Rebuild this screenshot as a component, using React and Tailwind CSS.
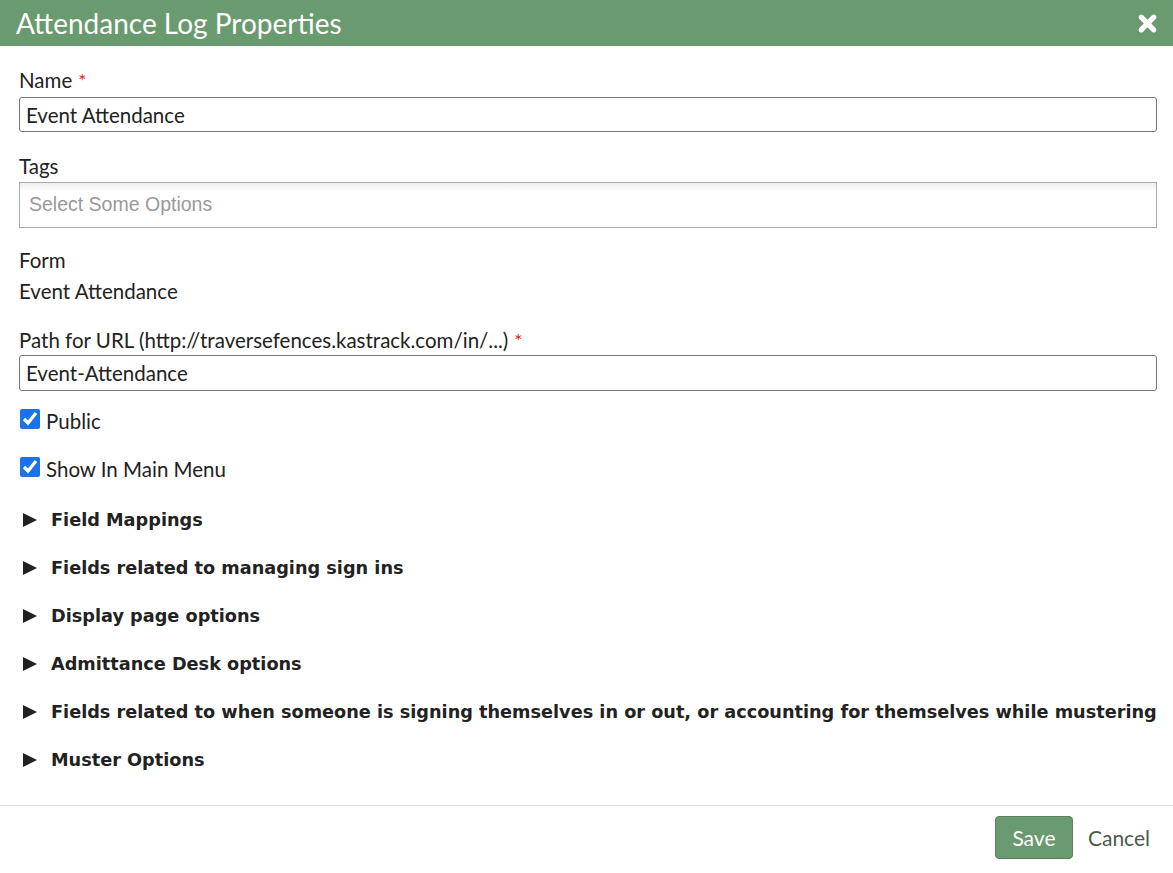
import { useState } from 'react';

const body = { fontFamily: 'Lato, "Noto Sans", sans-serif' };
const heading = { fontFamily: '"DejaVu Sans", Verdana, sans-serif' };

const sections = [
  'Field Mappings',
  'Fields related to managing sign ins',
  'Display page options',
  'Admittance Desk options',
  'Fields related to when someone is signing themselves in or out, or accounting for themselves while mustering',
  'Muster Options',
];

function Label({ children, required }) {
  return (
    <div className="text-[20.5px] leading-[24px] text-[#222]">
      {children}
      {required && <span className="ml-[6px] text-[#e02020] text-[19px]">*</span>}
    </div>
  );
}

function Check({ label }) {
  const [on, setOn] = useState(true);
  return (
    <label className="flex items-center gap-[6px] h-[24px] text-[20.5px] text-[#222]">
      <input
        type="checkbox"
        checked={on}
        onChange={() => setOn(!on)}
        className="w-[20px] h-[20px] accent-[#1a73e8] m-0 -mt-[4px] ml-[1px]"
      />
      {label}
    </label>
  );
}

export default function App() {
  const [name, setName] = useState('Event Attendance');
  const [path, setPath] = useState('Event-Attendance');

  return (
    <div className="w-[1173px] h-[873px] bg-white flex flex-col overflow-hidden" style={body}>
      <div className="h-[46px] bg-[#6a9a6f] flex items-center justify-between pl-[16px] pr-[15px] shrink-0">
        <h1 className="text-white text-[28px] leading-none">Attendance Log Properties</h1>
        <button className="text-white">
          <svg width="21" height="21" viewBox="0 0 20 20">
            <path d="M4 4 L16 16 M16 4 L4 16" stroke="white" strokeWidth="5" strokeLinecap="round" />
          </svg>
        </button>
      </div>

      <div className="flex-1 px-[19px] pt-[22px] pr-[16px]">
        <Label required>Name</Label>
        <input
          value={name}
          onChange={(e) => setName(e.target.value)}
          className="mt-[4px] w-full h-[35px] border border-[#777] rounded-[3px] px-[6px] text-[20.5px] text-[#222] outline-none"
        />

        <div className="mt-[22px]">
          <Label>Tags</Label>
        </div>
        <div className="mt-[4px] h-[46px] border border-[#aaa] bg-gradient-to-b from-[#eee] to-white to-[20%] flex items-center px-[9px]">
          <span className="text-[19.5px] text-[#999]" style={{ fontFamily: '"Liberation Sans", Arial, sans-serif' }}>
            Select Some Options
          </span>
        </div>

        <div className="mt-[20px]">
          <Label>Form</Label>
        </div>
        <div className="mt-[7px] text-[20.5px] leading-[24px] text-[#222]">Event Attendance</div>

        <div className="mt-[25px]">
          <Label required>Path for URL (http://traversefences.kastrack.com/in/...)</Label>
        </div>
        <input
          value={path}
          onChange={(e) => setPath(e.target.value)}
          className="mt-[2px] w-full h-[36px] border border-[#777] rounded-[3px] px-[6px] text-[20.5px] text-[#222] outline-none"
        />

        <div className="mt-[18px] flex flex-col gap-[24px]">
          <Check label="Public" />
          <Check label="Show In Main Menu" />
        </div>

        <div className="mt-[27px] flex flex-col gap-[24px]" style={heading}>
          {sections.map((s) => (
            <div key={s} className="flex items-center h-[24px] text-[#222] text-[17.7px] font-bold whitespace-nowrap">
              <svg width="14" height="14" viewBox="0 0 14 14" className="ml-[4px] mr-[14px] shrink-0">
                <path d="M0 0 L14 7 L0 14 Z" fill="#222" />
              </svg>
              <span>{s}</span>
            </div>
          ))}
        </div>
      </div>

      <div className="border-t border-[#ddd] h-[68px] flex items-center justify-end gap-[15px] pr-[23px] pb-[4px] shrink-0">
        <button className="h-[43px] w-[78px] bg-[#6a9a6f] border border-[#58805c] rounded-[4px] text-white text-[21px]">
          Save
        </button>
        <button className="text-[21px] text-[#4a5a4b]">Cancel</button>
      </div>
    </div>
  );
}
